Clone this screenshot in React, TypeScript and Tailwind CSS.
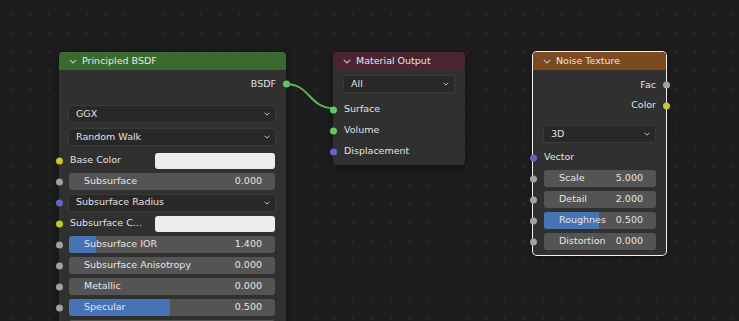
import type { ReactNode } from 'react';

const SOCKET: Record<string, string> = {
  gray: 'bg-[#a1a1a1]',
  yellow: 'bg-[#c7c729]',
  purple: 'bg-[#6363c7]',
  green: 'bg-[#63c763]',
};

function Socket({ color, side }: { color: string; side: 'left' | 'right' }) {
  return (
    <span
      className={`absolute top-1/2 -translate-y-1/2 w-[7px] h-[7px] rounded-full ${SOCKET[color]} ${
        side === 'left' ? 'left-[-3.5px]' : 'right-[-3.5px]'
      }`}
    />
  );
}

function Chevron({ className = '' }: { className?: string }) {
  return (
    <svg width="8" height="5" viewBox="0 0 8 5" className={className}>
      <path d="M0.8 0.8 L4 4 L7.2 0.8" fill="none" stroke="currentColor" strokeWidth="1.2" />
    </svg>
  );
}

function Header({ title, color }: { title: string; color: string }) {
  return (
    <div className={`h-[18px] flex items-center pl-[10px] gap-[5px] rounded-t-[4px] ${color}`}>
      <Chevron className="text-[#bdbdbd]" />
      <span className="text-[#e6e6e6] text-[9.5px] leading-none">{title}</span>
    </div>
  );
}

function Dropdown({ label, className = '' }: { label: string; className?: string }) {
  return (
    <div
      className={`h-[18px] flex items-center justify-between pl-[7px] pr-[5px] rounded-[3px] bg-[#282828] border border-[#3a3a3a] text-[#e2e2e2] text-[9.5px] ${className}`}
    >
      <span>{label}</span>
      <Chevron className="text-[#cfcfcf] w-[6px] h-[4px]" />
    </div>
  );
}

function Slider({ label, value, fill = 0 }: { label?: string; value?: string; fill?: number }) {
  return (
    <div className="relative h-[17px] w-full rounded-[3px] bg-[#545454] overflow-hidden text-[#e6e6e6] text-[9.5px]">
      {fill > 0 && <div className="absolute inset-y-0 left-0 bg-[#4772b3]" style={{ width: `${fill}%` }} />}
      <div className="relative h-full flex items-center justify-between pl-[15px] pr-[13px]">
        <span className="truncate">{label}</span>
        <span>{value}</span>
      </div>
    </div>
  );
}

function Row({ children, socket, h = 'h-[21px]', px = 'pl-[10px] pr-[11px]' }: { children: ReactNode; socket?: string; h?: string; px?: string }) {
  return (
    <div className={`relative ${h} flex items-center ${px}`}>
      {socket && <Socket color={socket} side="left" />}
      {children}
    </div>
  );
}

function ColorRow({ label }: { label: string }) {
  return (
    <Row socket="yellow">
      <span className="w-[86px] text-[#e2e2e2] text-[9.5px] truncate pl-[1px]">{label}</span>
      <div className="h-[16px] flex-1 rounded-[3px] bg-[#ececec]" />
    </Row>
  );
}

export default function App() {
  return (
    <div
      className="relative w-[739px] h-[321px] overflow-hidden bg-[#1d1d1d] bg-[radial-gradient(circle,#2e2e2e_0.9px,transparent_1.4px)] bg-[size:19px_19px] bg-[position:1.5px_4.5px]"
      style={{ fontFamily: '"DejaVu Sans", sans-serif' }}
    >
      {/* Principled BSDF */}
      <div className="absolute left-[59px] top-[52px] w-[227px] rounded-[4px] bg-[#303030] shadow-[0_0_0_1px_#181818,0_2px_6px_rgba(0,0,0,0.5)]">
        <Header title="Principled BSDF" color="bg-[#3a6a2d]" />
        <div className="pt-[4px] pb-[10px]">
          <div className="relative h-[20px] flex items-center justify-end pr-[10px] text-[#e2e2e2] text-[9.5px]">
            BSDF
            <Socket color="green" side="right" />
          </div>
          <div className="mt-[11px] pl-[9px] pr-[10px]">
            <Dropdown label="GGX" />
            <Dropdown label="Random Walk" className="mt-[5px]" />
          </div>
          <div className="mt-[4px]">
            <ColorRow label="Base Color" />
            <Row socket="gray"><Slider label="Subsurface" value="0.000" /></Row>
            <Row socket="purple" px="pl-[9px] pr-[10px]"><Dropdown label="Subsurface Radius" className="w-full" /></Row>
            <ColorRow label="Subsurface C..." />
            <Row socket="gray"><Slider label="Subsurface IOR" value="1.400" fill={13} /></Row>
            <Row socket="gray"><Slider label="Subsurface Anisotropy" value="0.000" /></Row>
            <Row socket="gray"><Slider label="Metallic" value="0.000" /></Row>
            <Row socket="gray"><Slider label="Specular" value="0.500" fill={49} /></Row>
            <Row socket="gray"><Slider /></Row>
          </div>
        </div>
      </div>

      {/* Link */}
      <svg className="absolute left-0 top-0 pointer-events-none" width="739" height="321">
        <path d="M286 84 C 310 84, 309 108, 333 108" fill="none" stroke="#5cb856" strokeWidth="2" />
      </svg>

      {/* Material Output */}
      <div className="absolute left-[333px] top-[52px] w-[132px] h-[113px] rounded-[4px] bg-[#303030] shadow-[0_0_0_1px_#181818,0_2px_6px_rgba(0,0,0,0.5)]">
        <Header title="Material Output" color="bg-[#4a2431]" />
        <div className="pt-[5px] px-[10px]">
          <Dropdown label="All" />
        </div>
        <div className="mt-[6px] text-[#e2e2e2] text-[9.5px]">
          <Row socket="green" px="pl-[11px]">Surface</Row>
          <Row socket="green" px="pl-[11px]">Volume</Row>
          <Row socket="purple" px="pl-[11px]">Displacement</Row>
        </div>
      </div>

      {/* Noise Texture */}
      <div className="absolute left-[533px] top-[52px] w-[133px] h-[203px] rounded-[4px] bg-[#303030] shadow-[0_0_0_1px_#f0f0f0,0_2px_6px_rgba(0,0,0,0.5)]">
        <Header title="Noise Texture" color="bg-[#7c4a1e]" />
        <div className="pt-[5px] text-[#e2e2e2] text-[9.5px]">
          <div className="relative h-[20px] flex items-center justify-end pr-[10px]">
            Fac
            <Socket color="gray" side="right" />
          </div>
          <div className="relative h-[21px] flex items-center justify-end pr-[10px]">
            Color
            <Socket color="yellow" side="right" />
          </div>
          <div className="mt-[9px] pl-[10px] pr-[10px]">
            <Dropdown label="3D" />
          </div>
          <Row socket="purple" h="h-[21px] mt-[4px]" px="pl-[11px]">Vector</Row>
          <Row socket="gray" px="pl-[11px] pr-[10px]"><Slider label="Scale" value="5.000" /></Row>
          <Row socket="gray" px="pl-[11px] pr-[10px]"><Slider label="Detail" value="2.000" /></Row>
          <Row socket="gray" px="pl-[11px] pr-[10px]"><Slider label="Roughnes" value="0.500" fill={49} /></Row>
          <Row socket="gray" px="pl-[11px] pr-[10px]"><Slider label="Distortion" value="0.000" /></Row>
        </div>
      </div>
    </div>
  );
}
